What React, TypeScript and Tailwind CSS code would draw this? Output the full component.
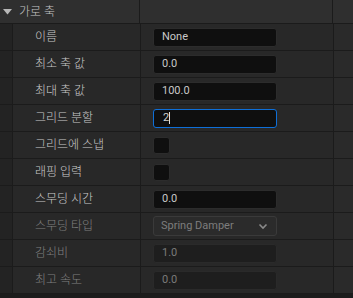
import React from "react";

const FONT = { fontFamily: "Roboto, 'Noto Sans CJK KR', sans-serif" };

type Row = {
  label: string;
  disabled?: boolean;
  kind: "text" | "check" | "focus" | "select";
  value?: string;
};

const rows: Row[] = [
  { label: "이름", kind: "text", value: "None" },
  { label: "최소 축 값", kind: "text", value: "0.0" },
  { label: "최대 축 값", kind: "text", value: "100.0" },
  { label: "그리드 분할", kind: "focus", value: "2" },
  { label: "그리드에 스냅", kind: "check" },
  { label: "래핑 입력", kind: "check" },
  { label: "스무딩 시간", kind: "text", value: "0.0" },
  { label: "스무딩 타입", kind: "select", value: "Spring Damper", disabled: true },
  { label: "감쇠비", kind: "text", value: "1.0", disabled: true },
  { label: "최고 속도", kind: "text", value: "0.0", disabled: true },
];

function Value({ row }: { row: Row }) {
  if (row.kind === "check") {
    return <div className="w-[17px] h-[17px] rounded-[3px] bg-[#0f0f0f] border border-[#2c2c2c]" />;
  }
  if (row.kind === "select") {
    return (
      <div className="w-[124px] h-[20px] rounded-[3px] bg-[#2b2b2b] border border-[#3a3a3a] flex items-center justify-between pl-[7px] pr-[8px] text-[11px] text-[#7d7d7d]">
        <span>{row.value}</span>
        <svg width="10" height="7" viewBox="0 0 10 7" fill="none">
          <path d="M1.5 1.5 L5 5 L8.5 1.5" stroke="#8a8a8a" strokeWidth="1.6" />
        </svg>
      </div>
    );
  }
  if (row.kind === "focus") {
    return (
      <div className="w-[124px] h-[19px] rounded-[3px] bg-[#0f0f0f] border border-[#0e6fd8] flex items-center pl-[9px] text-[11px] text-[#d0d0d0]">
        <span>{row.value}</span>
        <span className="w-px h-[12px] bg-[#e0e0e0]" />
      </div>
    );
  }
  return (
    <div
      className={
        "w-[124px] h-[19px] rounded-[3px] border flex items-center pl-[8px] text-[11px] " +
        (row.disabled
          ? "bg-[#1e1e1e] border-[#2a2a2a] text-[#7a7a7a]"
          : "bg-[#0f0f0f] border-[#2c2c2c] text-[#c8c8c8]")
      }
    >
      {row.value}
    </div>
  );
}

export default function App() {
  return (
    <div className="w-[353px] h-[298px] bg-[#1c1c1c] overflow-hidden flex flex-col" style={FONT}>
      <div className="flex h-[24px] border-b border-[#1b1b1b] bg-[#2f2f2f] shrink-0">
        <div className="w-[140px] flex items-center pl-[3px] gap-[7px] border-r border-[#1b1b1b]">
          <svg width="9" height="6" viewBox="0 0 9 6">
            <path d="M0 0 H9 L4.5 5.5 Z" fill="#b8b8b8" />
          </svg>
          <span className="text-[12px] font-light text-[#c4c4c4]">가로 축</span>
        </div>
        <div className="w-[193px] border-r border-[#1b1b1b]" />
        <div className="flex-1" />
      </div>
      {rows.map((r, i) => (
        <div key={i} className="flex h-[27px] border-b border-[#1b1b1b] shrink-0">
          <div className="w-[13px] bg-[#232323] border-r border-[#1b1b1b]" />
          <div
            className={
              "w-[128px] bg-[#282828] border-r border-[#1b1b1b] flex items-center pl-[22px] text-[12px] font-light " +
              (r.disabled ? "text-[#808080]" : "text-[#c8c8c8]")
            }
          >
            {r.label}
          </div>
          <div className="w-[193px] bg-[#282828] border-r border-[#1b1b1b] flex items-center pl-[12px]">
            <Value row={r} />
          </div>
          <div className="flex-1 bg-[#2a2a2a]" />
        </div>
      ))}
    </div>
  );
}
